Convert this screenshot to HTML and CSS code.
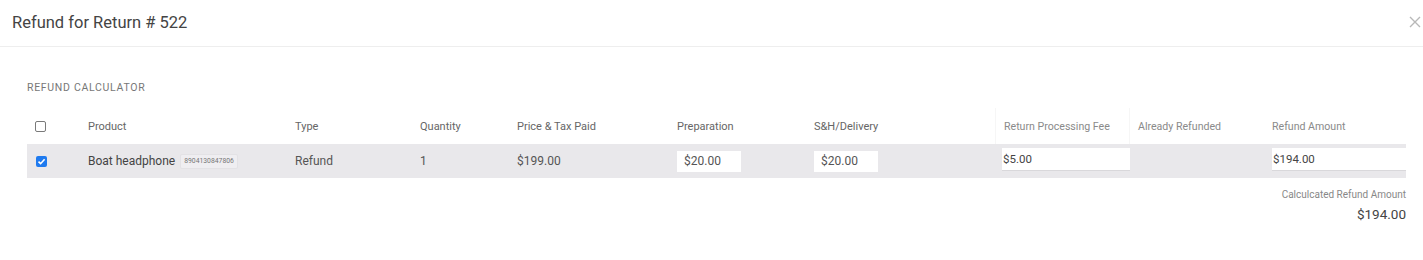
FILE: index.html
```
<!DOCTYPE html>
<html>
<head>
<meta charset="utf-8">
<link rel="stylesheet" href="styles.css">
</head>
<body>
<div class="modal">
  <div class="modal-header">
    <h1 class="modal-title">Refund for Return # 522</h1>
    <button class="close" aria-label="Close">
      <svg width="12" height="12" viewBox="0 0 12 12"><path d="M1 1L11 11M11 1L1 11" stroke="#b8b8b8" stroke-width="1.4" fill="none"/></svg>
    </button>
  </div>
  <div class="modal-body">
    <div class="section-label">REFUND CALCULATOR</div>
    <div class="table">
      <div class="row head">
        <div class="cell"><span class="cb"></span></div>
        <div class="cell">Product</div>
        <div class="cell">Type</div>
        <div class="cell">Quantity</div>
        <div class="cell">Price &amp; Tax Paid</div>
        <div class="cell">Preparation</div>
        <div class="cell">S&amp;H/Delivery</div>
        <div class="cell alt bl">Return Processing Fee</div>
        <div class="cell alt bl">Already Refunded</div>
        <div class="cell alt">Refund Amount</div>
      </div>
      <div class="row data">
        <div class="cell"><span class="cb checked"><svg width="9" height="9" viewBox="0 0 9 9"><path d="M1.5 4.7L3.6 6.7L7.6 2.2" stroke="#fff" stroke-width="1.6" fill="none"/></svg></span></div>
        <div class="cell product">Boat headphone <span class="sku">8904130847806</span></div>
        <div class="cell">Refund</div>
        <div class="cell">1</div>
        <div class="cell">$199.00</div>
        <div class="cell"><input class="inp" value="$20.00"></div>
        <div class="cell"><input class="inp" value="$20.00"></div>
        <div class="cell"><input class="inp alt-inp w128" value="$5.00"></div>
        <div class="cell"></div>
        <div class="cell"><input class="inp alt-inp w134" value="$194.00"></div>
      </div>
    </div>
    <div class="total">
      <div class="total-label">Calculcated Refund Amount</div>
      <div class="total-value">$194.00</div>
    </div>
  </div>
</div>
</body>
</html>
```
FILE: styles.css
```
* { box-sizing: border-box; }
body {
  margin: 0;
  background: #fff;
  font-family: Roboto, "Liberation Sans", sans-serif;
  color: #555;
}
.modal-header {
  height: 47px;
  border-bottom: 1px solid #eeeeee;
  display: flex;
  align-items: center;
  justify-content: space-between;
  padding: 0 2px 2px 12px;
}
.modal-title {
  margin: 0;
  font-size: 16.5px;
  font-weight: 400;
  color: #444;
}
.close {
  border: 0;
  background: none;
  padding: 0;
  width: 12px;
  height: 12px;
  display: flex;
}
.modal-body {
  padding: 35px 0 0 27px;
}
.section-label {
  font-size: 10.5px;
  letter-spacing: 0.7px;
  color: #777;
  line-height: 12px;
  margin-bottom: 13px;
}
.table {
  width: 1379px;
}
.row {
  display: grid;
  grid-template-columns: 53px 207px 125px 97px 160px 137px 189px 134px 135px 142px;
}
.cell {
  padding-left: 8px;
  display: flex;
  align-items: center;
}
.head {
  height: 37px;
  font-size: 11px;
  color: #666;
  padding-top: 1px;
}
.head .cell.alt {
  font-size: 10.6px;
  color: #8a8a8a;
  letter-spacing: 0;
}
.head .cell.bl {
  border-left: 1px solid #f6f6f6;
}
.data {
  height: 34px;
  background: #e9e8eb;
  font-size: 12px;
  color: #555;
}
.cb {
  width: 11px;
  height: 11px;
  border: 1px solid #7a7a7a;
  border-radius: 2px;
  background: #fff;
  display: flex;
  align-items: center;
  justify-content: center;
}
.cb.checked {
  border: 0;
  background: #1f7aef;
  margin-left: 1px;
}
.product {
  color: #444;
}
.sku {
  display: inline-block;
  margin-left: 5px;
  font-size: 6.8px;
  color: #777;
  background: #efeef1;
  border: 1px solid #e3e2e5;
  border-radius: 2px;
  padding: 3px 3px;
  line-height: 7px;
}
.inp {
  width: 64px;
  height: 21px;
  border: 0;
  background: #fff;
  font-family: Roboto, "Liberation Sans", sans-serif;
  font-size: 12px;
  color: #555;
  padding: 0 0 0 7px;
  outline: none;
}
.alt-inp {
  height: 22px;
  margin-top: -4px;
  padding-left: 1px;
  font-size: 11.5px;
  color: #444;
  box-shadow: 0 1px 0 #d9d8db;
}
.w128 { width: 128px; margin-left: -1px; }
.w134 { width: 134px; }
.total {
  width: 1379px;
  text-align: right;
  padding-top: 11px;
}
.total-label {
  font-size: 10px;
  color: #888;
  line-height: 12px;
}
.total-value {
  font-size: 13.5px;
  color: #444;
  line-height: 16px;
  margin-top: 5px;
}
```
